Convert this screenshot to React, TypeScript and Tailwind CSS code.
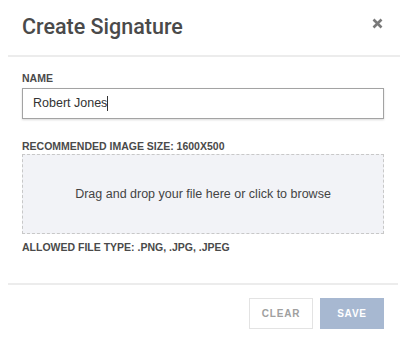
import React from "react";

export default function App() {
  return (
    <div
      className="w-[400px] h-[345px] bg-white overflow-hidden"
      style={{ fontFamily: '"Liberation Sans", Arial, sans-serif' }}
    >
      <div className="pl-2">
        <div className="flex items-start justify-between h-[55px] pl-[14px] pr-[17px]">
          <h1
            className="mt-[14px] text-[21.5px] leading-[26px] font-medium text-[#4a4a4a]"
            style={{ fontFamily: 'Roboto, "Liberation Sans", sans-serif' }}
          >
            Create Signature
          </h1>
          <button className="mt-[18px]">
            <svg width="11" height="11" viewBox="0 0 11 11" className="block">
              <path d="M1.5 1.5 L9.5 9.5 M9.5 1.5 L1.5 9.5" stroke="#7a7a7a" strokeWidth="2.6" />
            </svg>
          </button>
        </div>
        <div className="h-[2px] bg-[#ececec]" />
        <div className="pl-[14px] pr-[16px]">
          <div className="mt-[15px] text-[10.5px] leading-[12px] font-bold text-[#4a4a4a]">NAME</div>
          <div className="mt-[4px] h-[31px] border border-[#a3a3a3] shadow-[0_1px_2px_rgba(0,0,0,0.15)] flex items-center pl-[10px] text-[12.5px] text-[#333]">
            Robert Jones<span className="inline-block w-px h-[15px] bg-[#333]" />
          </div>
          <div className="mt-[21px] text-[10.5px] leading-[12px] font-bold text-[#4a4a4a]">
            RECOMMENDED IMAGE SIZE: 1600X500
          </div>
          <div className="mt-[2px] h-[80px] border border-dashed border-[#c8c8c8] bg-[#f2f3f7] flex items-center justify-center text-[12.5px] text-[#444]">
            Drag and drop your file here or click to browse
          </div>
          <div className="mt-[7px] text-[10.5px] leading-[12px] font-bold text-[#4a4a4a]">
            ALLOWED FILE TYPE: .PNG, .JPG, .JPEG
          </div>
        </div>
        <div className="mt-[30px] h-[2px] bg-[#ececec] mr-[2px]" />
        <div className="flex justify-end gap-[7px] pr-[16px] mt-[13px]">
          <button className="w-[64px] h-[31px] border border-[#e3e3e3] bg-white text-[10px] font-bold tracking-[0.8px] text-[#a0a0a0]">
            CLEAR
          </button>
          <button className="w-[64px] h-[31px] bg-[#a7b8d1] text-[10px] font-bold tracking-[0.8px] text-white">
            SAVE
          </button>
        </div>
      </div>
    </div>
  );
}
